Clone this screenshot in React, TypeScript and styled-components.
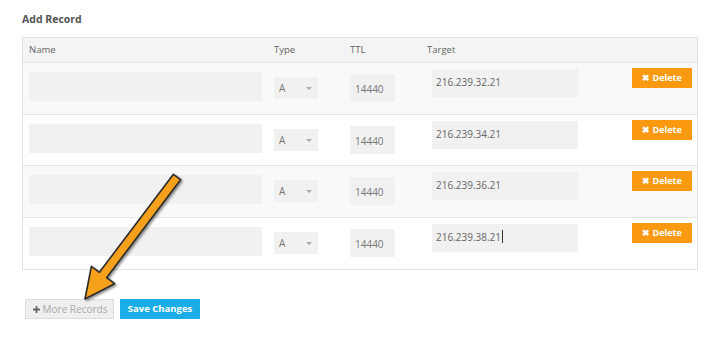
import styled, { createGlobalStyle } from 'styled-components'

const GlobalStyle = createGlobalStyle`
  html, body {
    margin: 0;
    padding: 0;
    background: #fff;
    font-family: "Open Sans", "Liberation Sans", sans-serif;
  }
`

const Page = styled.div`
  position: relative;
  width: 707px;
  height: 338px;
  box-sizing: border-box;
  padding: 12px 0 0 22px;
`

const Title = styled.h3`
  margin: 0 0 11px;
  font-size: 10.5px;
  line-height: 14px;
  font-weight: 700;
  color: #555;
`

const Table = styled.div`
  width: 676px;
  box-sizing: border-box;
  border: 1px solid #e3e3e3;
`

const cols = '245px 76px 77px 204px 72px'

const HeadRow = styled.div`
  display: grid;
  grid-template-columns: ${cols};
  height: 25px;
  box-sizing: border-box;
  background: #f4f4f4;
  border-bottom: 1px solid #e3e3e3;
`

const HeadCell = styled.div`
  padding-left: 6px;
  font-size: 9.5px;
  line-height: 24px;
  color: #666;
`

const Row = styled.div<{ $striped: boolean }>`
  display: grid;
  grid-template-columns: ${cols};
  align-items: start;
  height: 51.5px;
  box-sizing: border-box;
  background: ${(p) => (p.$striped ? '#f9f9f9' : '#fff')};
  border-bottom: 1px solid #e6e6e6;
  &:last-child {
    border-bottom: none;
  }
`

const Cell = styled.div`
  padding-left: 6px;
`

const NameField = styled.div`
  margin-top: 9px;
  width: 233px;
  height: 29px;
  background: #f1f1f1;
`

const Select = styled.div`
  position: relative;
  margin-top: 14px;
  width: 44px;
  height: 22px;
  box-sizing: border-box;
  padding-left: 5px;
  background: #f1f1f1;
  font-size: 10px;
  line-height: 22px;
  color: #777;
  &::after {
    content: '';
    position: absolute;
    left: 32px;
    top: 10px;
    border-left: 3px solid transparent;
    border-right: 3px solid transparent;
    border-top: 3px solid #aaa;
  }
`

const TtlField = styled.div`
  margin-top: 11px;
  width: 45px;
  height: 28px;
  box-sizing: border-box;
  padding: 7px 0 0 5px;
  background: #f1f1f1;
  font-size: 10px;
  line-height: 16px;
  color: #777;
`

const TargetField = styled.div`
  display: flex;
  align-items: center;
  margin: 6px 0 0 5px;
  width: 146px;
  height: 28px;
  box-sizing: border-box;
  padding: 0 0 2px 4px;
  background: #f1f1f1;
  font-size: 10px;
  color: #666;
`

const Caret = styled.span`
  display: inline-block;
  width: 1px;
  height: 13px;
  margin-left: 1px;
  background: #333;
`

const DeleteButton = styled.button`
  margin: 5px 0 0 1px;
  width: 60px;
  height: 20px;
  border: none;
  padding: 0;
  background: #fb9a10;
  color: #fff;
  font-family: inherit;
  font-size: 9px;
  font-weight: 700;
  line-height: 20px;
  text-align: center;
`

const Actions = styled.div`
  display: flex;
  gap: 6px;
  margin: 29px 0 0 3px;
`

const MoreButton = styled.button`
  display: flex;
  align-items: center;
  justify-content: center;
  gap: 3px;
  width: 89px;
  height: 20px;
  box-sizing: border-box;
  border: 1px solid #dcdcdc;
  padding: 0 0 0 1px;
  background: #efefef;
  color: #aaa;
  font-family: inherit;
  font-size: 10px;
  line-height: 18px;
`

const SaveButton = styled.button`
  width: 80px;
  height: 20px;
  border: none;
  padding: 0;
  background: #1aade6;
  color: #fff;
  font-family: inherit;
  font-size: 9.5px;
  font-weight: 700;
  line-height: 20px;
`

const Overlay = styled.svg`
  position: absolute;
  left: 0;
  top: 0;
  pointer-events: none;
`

const targets = ['216.239.32.21', '216.239.34.21', '216.239.36.21', '216.239.38.21']

export default function App() {
  return (
    <Page>
      <GlobalStyle />
      <Title>Add Record</Title>
      <Table>
        <HeadRow>
          <HeadCell>Name</HeadCell>
          <HeadCell>Type</HeadCell>
          <HeadCell>TTL</HeadCell>
          <HeadCell>Target</HeadCell>
          <HeadCell />
        </HeadRow>
        {targets.map((t, i) => (
          <Row key={t} $striped={i % 2 === 0}>
            <Cell>
              <NameField />
            </Cell>
            <Cell>
              <Select>A</Select>
            </Cell>
            <Cell>
              <TtlField>14440</TtlField>
            </Cell>
            <Cell>
              <TargetField>
                {t}
                {i === targets.length - 1 && <Caret />}
              </TargetField>
            </Cell>
            <Cell>
              <DeleteButton>✖ Delete</DeleteButton>
            </Cell>
          </Row>
        ))}
      </Table>
      <Actions>
        <MoreButton>
          <svg width="7" height="7" viewBox="0 0 7 7">
            <path d="M2.6 0h1.8v2.6H7v1.8H4.4V7H2.6V4.4H0V2.6h2.6z" fill="#666" />
          </svg>
          More Records
        </MoreButton>
        <SaveButton>Save Changes</SaveButton>
      </Actions>

      {/* callout arrow pointing at the More Records button */}
      <Overlay width="707" height="338" viewBox="0 0 707 338">
        <defs>
          <filter id="shadow" x="-20%" y="-20%" width="140%" height="140%">
            <feDropShadow dx="1.5" dy="1.5" stdDeviation="1.2" floodColor="#000" floodOpacity="0.45" />
          </filter>
        </defs>
        <polygon
          points="173.4,174.3 99.4,272.3 91.4,266.3 85,299 114.6,283.7 106.6,277.7 180.6,179.7"
          fill="#f6a11c"
          stroke="#2b2b2b"
          strokeWidth="1.6"
          strokeLinejoin="round"
          filter="url(#shadow)"
        />
      </Overlay>
    </Page>
  )
}
